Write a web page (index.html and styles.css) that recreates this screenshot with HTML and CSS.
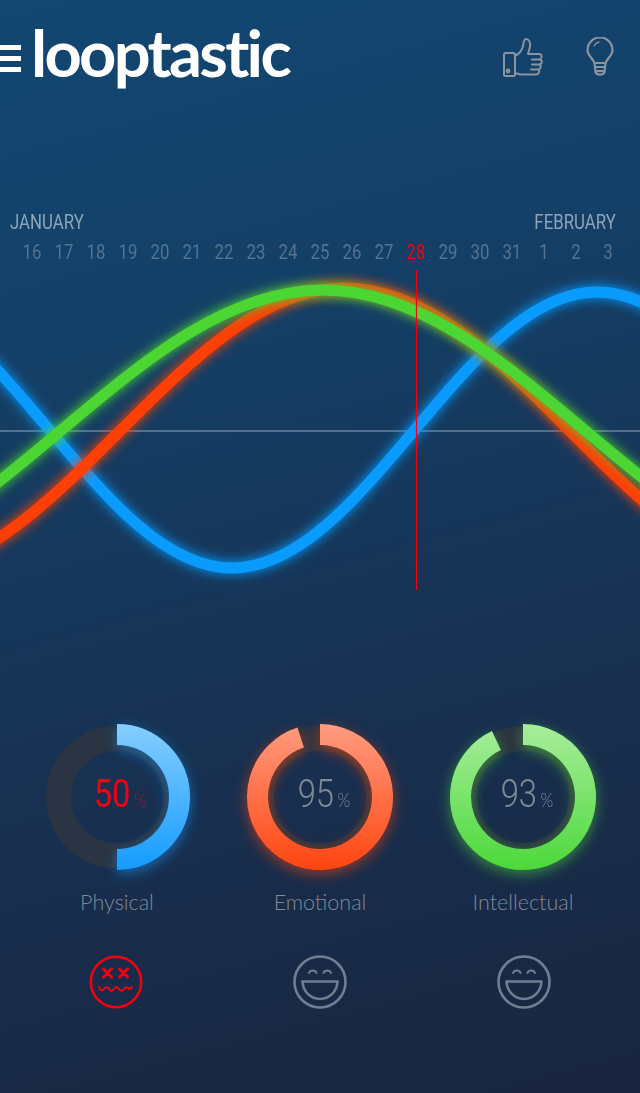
FILE: index.html
```html
<!DOCTYPE html>
<html lang="en">
<head>
<meta charset="utf-8">
<title>Looptastic</title>
<link rel="stylesheet" href="styles.css">
</head>
<body>
<main class="app">
  <header class="topbar">
    <div class="brand">
      <div class="burger"><span></span><span></span><span></span></div>
      <div class="logo">looptastic</div>
    </div>
    <div class="actions">
      <svg class="icon-thumb" width="42" height="44" viewBox="0 0 42 44" fill="none" stroke="#8b949c" stroke-width="2" stroke-linejoin="round" stroke-linecap="round">
        <rect x="1" y="16" width="11" height="23" rx="1.5"/>
        <circle cx="5" cy="34" r="1.4"/>
        <path d="M12 19 C16 17 19 13 20 9 C20.5 5 21 2 23 2 C26 2 27.5 5 27 9 C26.6 12 25.5 15 25 17 L36 17 C39 17 39.5 21 37 22.5 C39.5 23 39.5 27 36.5 27.5 C38.5 28.5 38 32 35.5 32.5 C37 33.5 36 37.5 33 37.5 L19 37.5 C16 37.5 14 36.5 12 36"/>
        <path d="M29 22.5 H37 M29 27.5 H36.5 M28 32.5 H35.5"/>
      </svg>
      <svg class="icon-bulb" width="28" height="40" viewBox="0 0 28 40" fill="none" stroke="#8b949c" stroke-width="2.2" stroke-linecap="round" stroke-linejoin="round">
        <path d="M8.5 26 C7 21 1.5 19 1.5 13 A12.5 12.5 0 0 1 26.5 13 C26.5 19 21 21 19.5 26 Z"/>
        <path d="M8 9 A7.5 7.5 0 0 1 13 5" stroke-width="1.3"/>
        <path d="M8.5 26 L9.5 35 C11 38.5 17 38.5 18.5 35 L19.5 26 M9 30 H19 M9.5 34 H18.5"/>
      </svg>
    </div>
  </header>

  <section class="calendar">
    <div class="months"><span class="m-start">JANUARY</span><span class="m-end">FEBRUARY</span></div>
    <div class="days">
      <span>16</span><span>17</span><span>18</span><span>19</span><span>20</span><span>21</span><span>22</span><span>23</span><span>24</span><span>25</span><span>26</span><span>27</span><span class="today">28</span><span>29</span><span>30</span><span>31</span><span>1</span><span>2</span><span>3</span>
    </div>
  </section>

  <svg class="chart" width="640" height="330" viewBox="0 270 640 330" fill="none">
    <defs>
      <filter id="glow" x="-10%" y="-20%" width="120%" height="140%">
        <feGaussianBlur stdDeviation="6"/>
      </filter>
    </defs>
    <path d="M0 431 H640" stroke="#93a8b8" stroke-width="1"/>
    <path class="c-blue" filter="url(#glow)" stroke-width="12" d="M-133 292 C0 292 99 568 232 568 C365 568 464 292 597 292 C730 292 829 568 962 568"/>
    <path class="c-blue" stroke-width="11" d="M-133 292 C0 292 99 568 232 568 C365 568 464 292 597 292 C730 292 829 568 962 568"/>
    <path class="c-orange" filter="url(#glow)" stroke-width="12" d="M-105 574 C59 574 181 288 345 288 C509 288 631 574 795 574"/>
    <path class="c-orange" stroke-width="11" d="M-105 574 C59 574 181 288 345 288 C509 288 631 574 795 574"/>
    <path class="c-green" filter="url(#glow)" stroke-width="12" d="M-200 570 C-10 570 133 290 323 290 C513 290 656 570 846 570"/>
    <path class="c-green" stroke-width="11" d="M-200 570 C-10 570 133 290 323 290 C513 290 656 570 846 570"/>
    <path d="M416.5 270 V590" stroke="#f4000f" stroke-width="1.2"/>
  </svg>

  <section class="rings">
    <article class="metric">
      <div class="ring">
        <svg width="160" height="160" viewBox="0 0 160 160" fill="none">
          <defs>
            <linearGradient id="gb" gradientUnits="userSpaceOnUse" x1="0" y1="7" x2="0" y2="153"><stop offset="0" stop-color="#86cdff"/><stop offset="1" stop-color="#149bff"/></linearGradient>
            <filter id="gl" x="-30%" y="-30%" width="160%" height="160%"><feGaussianBlur stdDeviation="7"/></filter>
          </defs>
          <circle cx="80" cy="80" r="58.5" stroke="#2a3442" stroke-width="25"/>
          <path class="halo" d="M80 17.5 A62.5 62.5 0 0 1 80 142.5" stroke="#149bff" stroke-width="21" filter="url(#gl)"/>
          <path d="M80 17.5 A62.5 62.5 0 0 1 80 142.5" stroke="url(#gb)" stroke-width="21"/>
        </svg>
        <div class="value alert">50<small>%</small></div>
      </div>
      <h2>Physical</h2>
    </article>
    <article class="metric">
      <div class="ring">
        <svg width="160" height="160" viewBox="0 0 160 160" fill="none">
          <defs>
            <linearGradient id="go" gradientUnits="userSpaceOnUse" x1="0" y1="7" x2="0" y2="153"><stop offset="0" stop-color="#ff9c80"/><stop offset="1" stop-color="#ff4510"/></linearGradient>
          </defs>
          <circle cx="80" cy="80" r="58.5" stroke="#2a3442" stroke-width="25"/>
          <path class="halo" d="M80 17.5 A62.5 62.5 0 1 1 60.7 20.56" stroke="#ff4510" stroke-width="21" filter="url(#gl)"/>
          <path d="M80 17.5 A62.5 62.5 0 1 1 60.7 20.56" stroke="url(#go)" stroke-width="21"/>
        </svg>
        <div class="value">95<small>%</small></div>
      </div>
      <h2>Emotional</h2>
    </article>
    <article class="metric">
      <div class="ring">
        <svg width="160" height="160" viewBox="0 0 160 160" fill="none">
          <defs>
            <linearGradient id="gg" gradientUnits="userSpaceOnUse" x1="0" y1="7" x2="0" y2="153"><stop offset="0" stop-color="#a8ee9c"/><stop offset="1" stop-color="#4cd83a"/></linearGradient>
          </defs>
          <circle cx="80" cy="80" r="58.5" stroke="#2a3442" stroke-width="25"/>
          <path class="halo" d="M80 17.5 A62.5 62.5 0 1 1 53.4 23.45" stroke="#4cd83a" stroke-width="21" filter="url(#gl)"/>
          <path d="M80 17.5 A62.5 62.5 0 1 1 53.4 23.45" stroke="url(#gg)" stroke-width="21"/>
        </svg>
        <div class="value">93<small>%</small></div>
      </div>
      <h2>Intellectual</h2>
    </article>
  </section>

  <section class="moods">
    <svg width="56" height="56" viewBox="0 0 56 56" fill="none" stroke="#f4000f" stroke-linecap="round">
      <circle cx="28" cy="28" r="25.2" stroke-width="2.6"/>
      <path d="M15.5 15 L23.5 23 M23.5 15 L15.5 23 M31.5 15 L39.5 23 M39.5 15 L31.5 23" stroke-width="3"/>
      <path d="M11 33 Q13.500 38.500 16 35 T21 35 T26 35 T31 35 T36 35 T41 35 Q43 35 44 33" stroke-width="2"/>
    </svg>
    <svg width="56" height="56" viewBox="0 0 56 56" fill="none" stroke="#6f7f92" stroke-linecap="round" stroke-linejoin="round">
      <circle cx="28" cy="28" r="25.5" stroke-width="2.6"/>
      <path d="M17 19 A4 4 0 0 1 24.500 19 M31.500 19 A4 4 0 0 1 39 19" stroke-width="2"/>
      <path d="M10.500 27.500 H45.500 C45 38 37 45 28 45 C19 45 11 38 10.500 27.500 Z" stroke-width="2.600"/>
    </svg>
    <svg width="56" height="56" viewBox="0 0 56 56" fill="none" stroke="#6f7f92" stroke-linecap="round" stroke-linejoin="round">
      <circle cx="28" cy="28" r="25.5" stroke-width="2.6"/>
      <path d="M17 19 A4 4 0 0 1 24.500 19 M31.500 19 A4 4 0 0 1 39 19" stroke-width="2"/>
      <path d="M10.500 27.500 H45.500 C45 38 37 45 28 45 C19 45 11 38 10.500 27.500 Z" stroke-width="2.600"/>
    </svg>
  </section>
</main>
</body>
</html>
```
FILE: styles.css
```css
* { box-sizing: border-box; }
html, body { margin: 0; padding: 0; }
body {
  width: 640px;
  height: 1093px;
  overflow: hidden;
  background: linear-gradient(165deg, #114772 0%, #143f66 30%, #182f4f 68%, #19253e 100%);
}
.app {
  display: flex;
  flex-direction: column;
  height: 1093px;
}
.topbar {
  display: flex;
  justify-content: space-between;
  align-items: flex-start;
  height: 212px;
  padding: 14px 26px 0 0;
}
.brand {
  display: flex;
  align-items: center;
  gap: 10px;
}
.burger {
  display: flex;
  flex-direction: column;
  gap: 6px;
  width: 21px;
  margin-top: 12px;
}
.burger span {
  display: block;
  height: 5px;
  background: #fff;
}
.logo {
  font-family: "Lato", sans-serif;
  font-weight: 700;
  font-size: 65px;
  line-height: 76px;
  letter-spacing: -2.7px;
  color: #fff;
}
.actions {
  display: flex;
  gap: 41px;
  padding-top: 23px;
}
.calendar {
  font-family: "Roboto", sans-serif;
  font-weight: 400;
}
.months {
  display: flex;
  justify-content: space-between;
  padding: 0 24px 0 10px;
  font-size: 21px;
  line-height: 20px;
  color: #8ea4b6;
}
.months span {
  display: inline-block;
  transform: scaleX(.8);
}
.months .m-start { transform-origin: left center; }
.months .m-end { transform-origin: right center; }
.days {
  display: flex;
  padding: 10px 0 0 16px;
  height: 38px;
}
.days span {
  width: 32px;
  text-align: center;
  font-size: 21px;
  line-height: 21px;
  color: #567390;
  transform: scaleX(.8);
}
.days .today { color: #f4000f; }
.chart {
  display: block;
  overflow: visible;
}
.c-blue { stroke: #0a9bff; }
.c-orange { stroke: #ff3f06; }
.c-green { stroke: #4bd633; }
.rings {
  display: grid;
  grid-template-columns: repeat(3, 203px);
  justify-content: center;
  margin-top: 117px;
}
.metric {
  display: flex;
  flex-direction: column;
  align-items: center;
}
.ring {
  display: grid;
  place-items: center;
  width: 160px;
  height: 160px;
}
.ring > * { grid-area: 1 / 1; }
.ring svg { overflow: visible; }
.halo {
  opacity: .55;
  transform: translateY(4px);
}
.value {
  font-family: "Roboto", sans-serif;
  font-weight: 300;
  font-size: 38px;
  line-height: 38px;
  color: #7f8a94;
  padding-left: 8px;
  margin-top: 0;
  transform: scaleX(.86);
}
.value small {
  font-family: "Lato", sans-serif;
  font-weight: 300;
  font-size: 19px;
  margin-left: 4px;
}
.value.alert { color: #f4000f; font-weight: 400; }
.value.alert small { color: #b5102a; }
.metric h2 {
  margin: 13px 0 0;
  font-family: "Lato", sans-serif;
  font-weight: 300;
  font-size: 21.5px;
  line-height: 24px;
  color: #808a96;
}
.moods {
  display: grid;
  grid-template-columns: repeat(3, 204px);
  justify-content: center;
  justify-items: center;
  margin-top: 40px;
}
```
